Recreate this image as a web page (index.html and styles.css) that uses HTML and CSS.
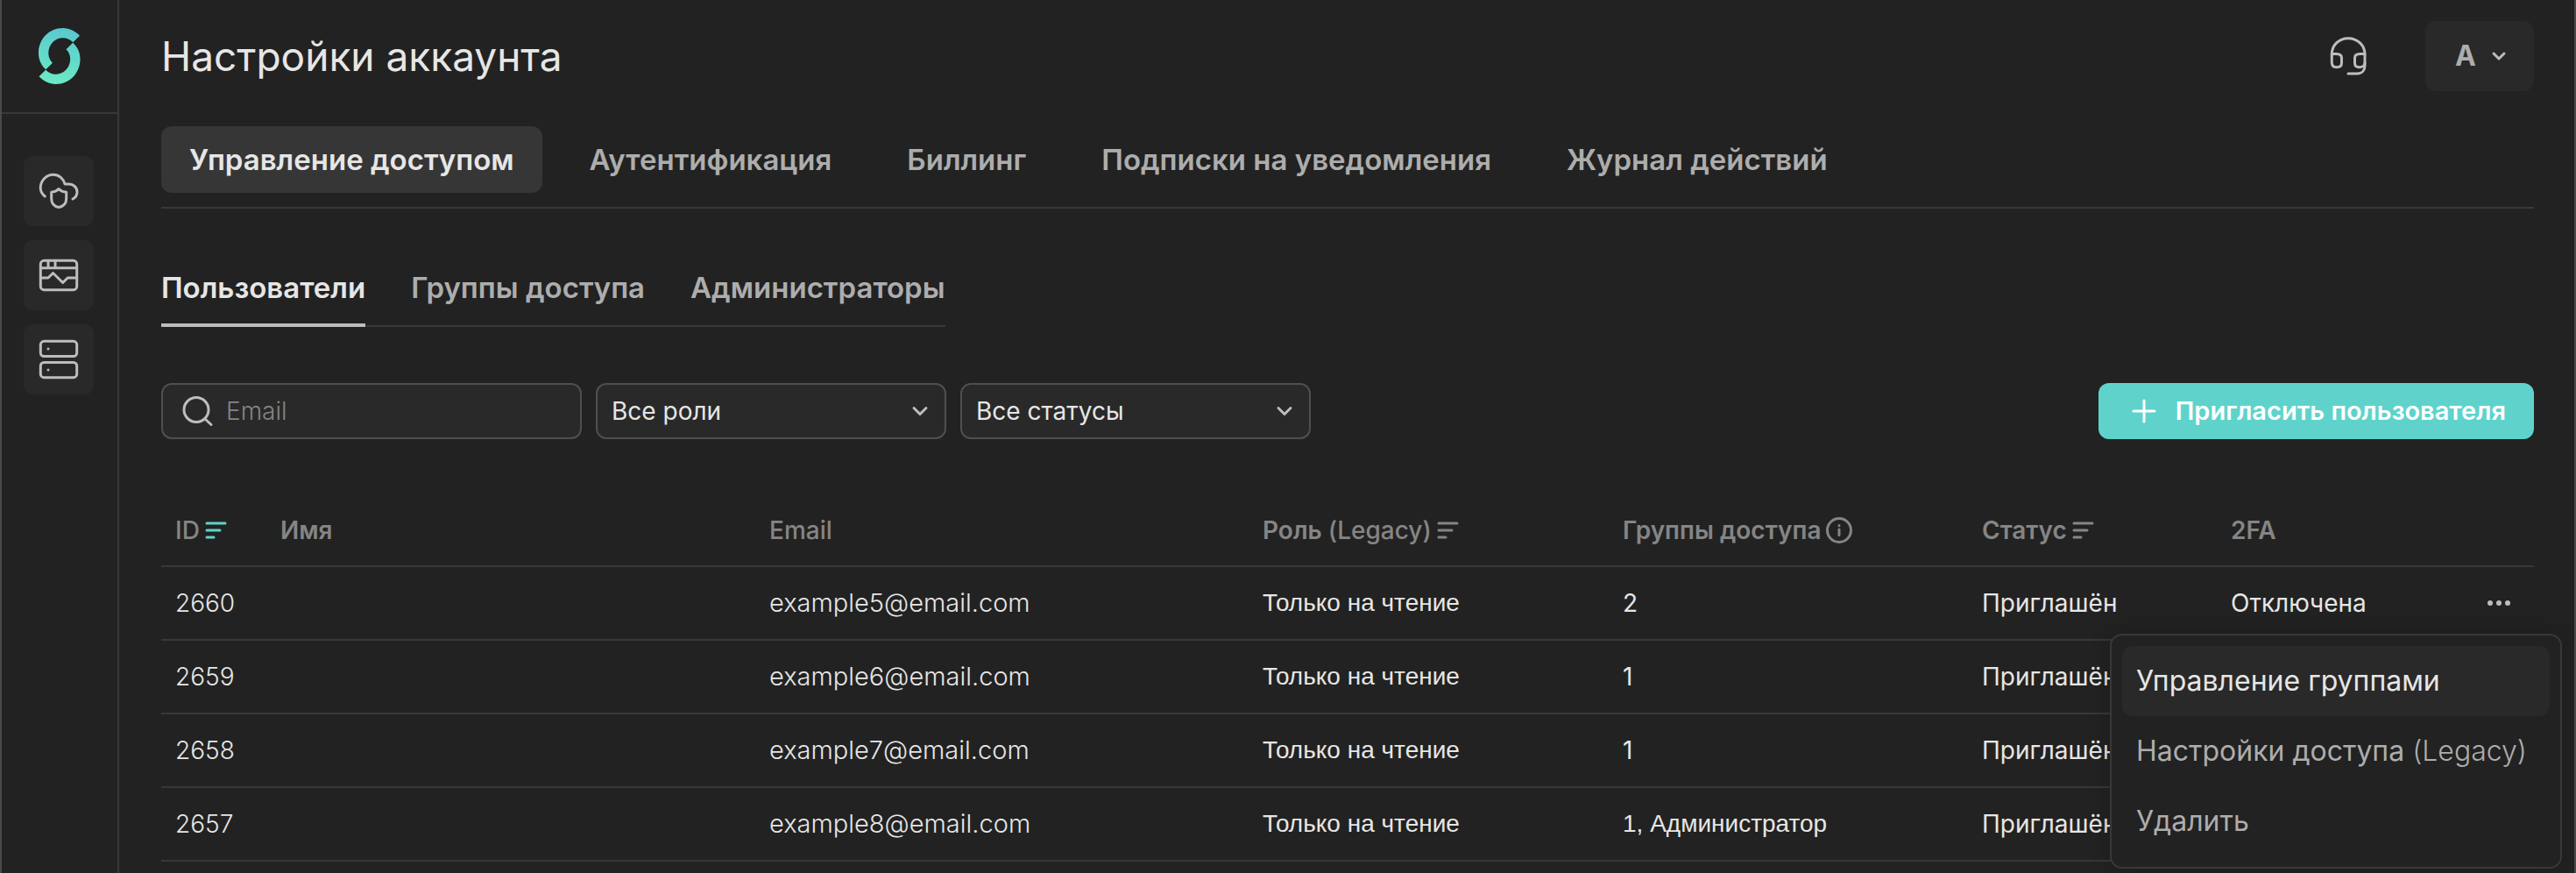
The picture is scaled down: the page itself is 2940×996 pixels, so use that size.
FILE: index.html
```html
<!DOCTYPE html>
<html lang="ru">
<head>
<meta charset="utf-8">
<title>Настройки аккаунта</title>
<link rel="stylesheet" href="styles.css">
</head>
<body>
<div class="app">
  <aside class="sidebar">
    <a class="logo" href="#" aria-label="Главная">
      <svg width="48" height="64" viewBox="0 0 48 64">
        <defs><linearGradient id="brand" gradientUnits="userSpaceOnUse" x1="30" y1="0" x2="18" y2="64"><stop offset="0" stop-color="#5ac8cd"/><stop offset="1" stop-color="#6beac5"/></linearGradient></defs>
        <g fill="url(#brand)">
          <path d="M47 8.7C42 3.5 35.5 0 27.7 0C12 0 0 12.5 0 28.7C0 36 3 42.5 8.3 47.3L16 39.7C13 37 11.3 33 11.3 28.7C11.3 19 18.5 11.3 27.7 11.3C32 11.3 36 13 39.3 16.3Z"/>
          <path d="M.5 55.3C5.5 60.5 12 64 19.8 64C35.5 64 47.5 51.5 47.5 35.3C47.5 28 44.5 21.5 39.2 16.7L31.5 24.3C34.5 27 36.2 31 36.2 35.3C36.2 45 29 52.7 19.8 52.7C15.5 52.7 11.5 51 8.2 47.7Z"/>
        </g>
      </svg>
    </a>
    <nav class="side-nav" aria-label="Разделы">
      <a class="side-link" href="#" aria-label="Защита облака">
        <svg class="icon" width="48" height="48" viewBox="0 0 48 48"><path d="M8.3 30C5 27.5 3.2 24 3.2 20.3C3.2 12 9.8 5.3 17.8 5.3C24.5 5.3 29.5 9.8 31 16H35.5C41 16 45 20 45 25C45 28.5 43 31.5 40 33"/><path d="M24 21.5C22 23.7 19 25 15.7 25.3V32.5C15.7 38 19 41.5 24 42.5C29 41.5 32.7 38 32.7 32.5V25.3C29 25 26 23.7 24 21.5Z"/></svg>
      </a>
      <a class="side-link" href="#" aria-label="Мониторинг">
        <svg class="icon" width="48" height="48" viewBox="0 0 48 48"><rect x="3.3" y="7.3" width="41.4" height="33.4" rx="4"/><path d="M3.3 15.7H44.7M12 7.3V15.7M20 7.3V15.7M3.3 27H12L17.5 21.5L28.7 32.5L34.2 27H44.7"/></svg>
      </a>
      <a class="side-link" href="#" aria-label="Серверы">
        <svg class="icon" width="48" height="48" viewBox="0 0 48 48"><rect x="3.3" y="3.3" width="41.4" height="17.2" rx="4"/><rect x="3.3" y="27.5" width="41.4" height="17.2" rx="4"/><path d="M12 11.9V12.1M12 35.9V36.1"/></svg>
      </a>
    </nav>
  </aside>

  <main class="main">
    <header class="header">
      <h1 class="title">Настройки аккаунта</h1>
      <div class="header-actions">
        <button class="plain-button" type="button" aria-label="Поддержка">
          <svg class="icon" width="48" height="48" viewBox="0 0 48 48"><path d="M5.3 22C5.3 11.5 13.5 3.7 24 3.7S43 11.5 43 22V35C43 40 40 44 34.5 44H24"/><path d="M5.3 21.5H10.5C14 21.5 16.5 23 16.5 26V32C16.5 35.5 14 36.7 10.8 36.7C7.5 36.7 5.3 35 5.3 31.5Z"/><path d="M43 21.5H37.5C34 21.5 31.5 23 31.5 26V32C31.5 35.5 34 36.7 37 36.7C41 36.7 43 34 43 31.5"/></svg>
        </button>
        <button class="account" type="button">A
          <svg class="icon" width="20" height="20" viewBox="0 0 20 20"><path d="M4 7L10 13L16 7"/></svg>
        </button>
      </div>
    </header>

    <nav class="tabs" aria-label="Настройки">
      <a class="tab tab-active" href="#">Управление доступом</a>
      <a class="tab" href="#">Аутентификация</a>
      <a class="tab" href="#">Биллинг</a>
      <a class="tab" href="#">Подписки на уведомления</a>
      <a class="tab" href="#">Журнал действий</a>
    </nav>

    <nav class="subtabs" aria-label="Управление доступом">
      <a class="subtab subtab-active" href="#">Пользователи</a>
      <a class="subtab" href="#">Группы доступа</a>
      <a class="subtab" href="#">Администраторы</a>
    </nav>

    <div class="toolbar">
      <label class="field search">
        <svg class="icon" width="40" height="40" viewBox="0 0 40 40"><circle cx="20" cy="18.5" r="14"/><path d="M30 29L37 35.5"/></svg>
        <input class="search-input" type="email" placeholder="Email" aria-label="Email">
      </label>
      <div class="select-wrap">
        <select class="field select" aria-label="Роль"><option>Все роли</option></select>
        <svg class="icon select-arrow" width="24" height="24" viewBox="0 0 24 24"><path d="M5 8.5L12 15.5L19 8.5"/></svg>
      </div>
      <div class="select-wrap">
        <select class="field select" aria-label="Статус"><option>Все статусы</option></select>
        <svg class="icon select-arrow" width="24" height="24" viewBox="0 0 24 24"><path d="M5 8.5L12 15.5L19 8.5"/></svg>
      </div>
      <button class="invite" type="button">
        <svg width="32" height="32" viewBox="0 0 32 32"><path d="M16 4V28M4 16H28"/></svg>
        Пригласить пользователя
      </button>
    </div>

    <table class="users">
      <colgroup><col class="col-id"><col class="col-name"><col class="col-email"><col class="col-role"><col class="col-groups"><col class="col-status"><col class="col-2fa"><col class="col-menu"></colgroup>
      <thead>
        <tr>
          <th scope="col"><button class="head-button head-latin" type="button">ID <svg class="sort sort-active" width="26" height="24" viewBox="0 0 26 24"><path d="M2 4H23M2 12H17M2 20H10"/></svg></button></th>
          <th scope="col">Имя</th>
          <th scope="col" class="head-latin">Email</th>
          <th scope="col"><button class="head-button" type="button"><span>Роль <span class="head-latin">(Legacy)</span></span> <svg class="sort" width="26" height="24" viewBox="0 0 26 24"><path d="M2 4H23M2 12H17M2 20H10"/></svg></button></th>
          <th scope="col"><button class="head-button" type="button">Группы доступа <svg class="info" width="30" height="30" viewBox="0 0 30 30"><circle cx="15" cy="15" r="13.5"/><path d="M15 14V20.5M15 9.5V9.7"/></svg></button></th>
          <th scope="col"><button class="head-button" type="button">Статус <svg class="sort" width="26" height="24" viewBox="0 0 26 24"><path d="M2 4H23M2 12H17M2 20H10"/></svg></button></th>
          <th scope="col">2FA</th>
          <td></td>
        </tr>
      </thead>
      <tbody>
        <tr>
          <td class="light">2660</td><td></td><td class="email">example5@email.com</td><td class="compact">Только на чтение</td><td>2</td><td>Приглашён</td><td>Отключена</td>
          <td class="menu-cell">
            <button class="plain-button" type="button" aria-label="Действия" aria-expanded="true"><svg class="dots" width="28" height="12" viewBox="0 0 28 12"><circle cx="4" cy="6" r="3"/><circle cx="14" cy="6" r="3"/><circle cx="24" cy="6" r="3"/></svg></button>
            <div class="menu">
              <button class="menu-item menu-item-active" type="button">Управление группами</button>
              <button class="menu-item" type="button">Настройки доступа <span class="light">(Legacy)</span></button>
              <button class="menu-item" type="button">Удалить</button>
            </div>
          </td>
        </tr>
        <tr><td class="light">2659</td><td></td><td class="email">example6@email.com</td><td class="compact">Только на чтение</td><td>1</td><td>Приглашён</td><td></td><td></td></tr>
        <tr><td class="light">2658</td><td></td><td class="email">example7@email.com</td><td class="compact">Только на чтение</td><td>1</td><td>Приглашён</td><td></td><td></td></tr>
        <tr><td class="light">2657</td><td></td><td class="email">example8@email.com</td><td class="compact">Только на чтение</td><td class="compact">1, Администратор</td><td>Приглашён</td><td></td><td></td></tr>
      </tbody>
    </table>
  </main>
</div>
</body>
</html>
```
FILE: styles.css
```css
* { box-sizing: border-box; }

body {
  margin: 0;
  background: #222222;
  color: #e6e6e6;
  font-family: Inter, "Liberation Sans", sans-serif;
  font-size: 28px;
  line-height: 40px;
}

a { color: inherit; text-decoration: none; }

button, input, select {
  font: inherit;
  color: inherit;
  border: 0;
  margin: 0;
  padding: 0;
  background: none;
}

svg { display: block; flex: none; }

.icon {
  fill: none;
  stroke: #bdbdbd;
  stroke-width: 3;
  stroke-linecap: round;
  stroke-linejoin: round;
}

.app {
  display: flex;
  min-height: 100vh;
  border-left: 2px solid #4a4a4a;
  border-right: 2px solid #4a4a4a;
}

.sidebar {
  flex: none;
  width: 134px;
  border-right: 2px solid #383838;
}

.logo {
  display: flex;
  align-items: center;
  justify-content: center;
  height: 130px;
  border-bottom: 2px solid #383838;
}

.side-nav {
  display: flex;
  flex-direction: column;
  align-items: center;
  gap: 16px;
  padding: 48px 2px 0 0;
}

.side-link {
  display: flex;
  padding: 16px;
  border-radius: 10px;
  background: #292929;
}

.main {
  flex: 1;
  min-width: 0;
  padding: 24px 46px 0 48px;
}

.header, .header-actions, .toolbar { display: flex; align-items: center; }
.header { justify-content: space-between; }
.header-actions { gap: 64px; }

.title {
  margin: 0;
  font-size: 46px;
  line-height: 56px;
  font-weight: 400;
}

.account {
  display: flex;
  align-items: center;
  gap: 16px;
  height: 80px;
  padding: 0 30px 0 34px;
  border-radius: 12px;
  background: #292929;
  color: #adadad;
  font-size: 32px;
  font-weight: 700;
}

.tabs {
  display: flex;
  gap: 22px;
  margin-top: 40px;
  padding-bottom: 16px;
  border-bottom: 2px solid #383838;
}

.tab, .subtab {
  color: #adadad;
  font-size: 33px;
  font-weight: 600;
  white-space: nowrap;
}

.tab {
  padding: 18px 32px;
  border-radius: 12px;
}

.tab-active { background: #363636; color: #e6e6e6; }

.subtabs {
  display: flex;
  gap: 52px;
  width: fit-content;
  margin-top: 70px;
  box-shadow: inset 0 -2px #383838;
}

.subtab {
  padding-bottom: 21px;
  border-bottom: 4px solid transparent;
}

.subtab-active { color: #e6e6e6; border-bottom-color: #bdbdbd; }

.toolbar { gap: 16px; margin-top: 64px; }

.field {
  height: 64px;
  border: 2px solid #4f4f4f;
  border-radius: 12px;
  background: #292929;
}

.search {
  display: flex;
  align-items: center;
  gap: 14px;
  width: 480px;
  padding: 0 18px;
}

.search-input { flex: 1; min-width: 0; outline: 0; font-weight: 300; }
.search-input::placeholder { color: #858585; opacity: 1; }

.select-wrap { display: grid; align-items: center; width: 400px; }

.select, .select-arrow { grid-area: 1 / 1; }

.select {
  width: 100%;
  padding: 0 48px 0 16px;
  appearance: none;
}

.select-arrow {
  justify-self: end;
  margin-right: 18px;
  pointer-events: none;
}

.invite {
  display: flex;
  align-items: center;
  gap: 20px;
  height: 64px;
  margin-left: auto;
  padding: 0 32px 0 36px;
  border-radius: 12px;
  background: #5fd3cb;
  color: #ffffff;
  font-size: 29px;
  font-weight: 600;
}

.invite path { stroke: #ffffff; stroke-width: 3; stroke-linecap: round; }

.users {
  width: 100%;
  margin-top: 64px;
  border-collapse: separate;
  border-spacing: 0;
  table-layout: fixed;
}

.col-id { width: 120px; }
.col-name { width: 558px; }
.col-email { width: 563px; }
.col-role { width: 411px; }
.col-groups { width: 410px; }
.col-status { width: 284px; }
.col-2fa { width: 292px; }
.col-menu { width: 70px; }

.users th, .users td {
  height: 84px;
  padding: 0 0 0 16px;
  border-bottom: 2px solid #383838;
  text-align: left;
  white-space: nowrap;
}

.users thead th, .users thead td { height: 82px; }

.users th { color: #858585; font-weight: 600; }
.users .head-latin { font-weight: 500; }

.head-button { display: flex; align-items: center; gap: 6px; }

.sort {
  fill: none;
  stroke: #858585;
  stroke-width: 3;
  stroke-linecap: round;
}

.sort-active { stroke: #5fd3cb; }

.info {
  fill: none;
  stroke: #858585;
  stroke-width: 3;
  stroke-linecap: round;
}

.light { font-weight: 300; }
.email { font-size: 29px; font-weight: 300; }
.compact { font-family: "Liberation Sans", sans-serif; }

.plain-button { display: block; }
.dots { fill: #bdbdbd; }

.menu-cell { position: relative; }

.menu {
  position: absolute;
  z-index: 1;
  top: 76px;
  right: -32px;
  display: flex;
  flex-direction: column;
  min-width: 516px;
  padding: 12px;
  border: 2px solid #383838;
  border-radius: 14px;
  background: #222222;
  box-shadow: 0 0 24px rgba(0, 0, 0, 0.2);
}

.menu-item {
  height: 80px;
  padding: 0 16px;
  border-radius: 12px;
  color: #adadad;
  font-size: 32px;
  text-align: left;
}

.menu-item-active { background: #292929; color: #e6e6e6; }
```
